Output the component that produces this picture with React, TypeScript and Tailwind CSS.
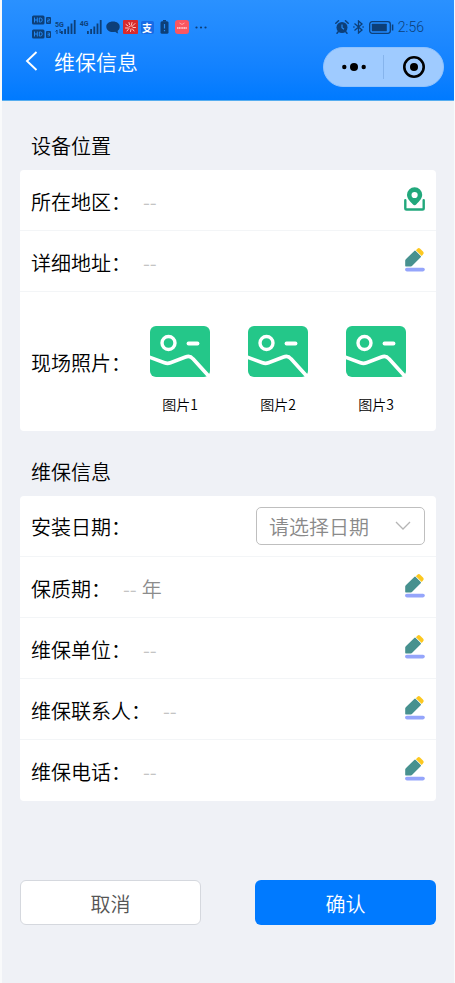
import type { ReactNode } from "react";

function PencilIcon() {
  return (
    <svg width="20" height="24" viewBox="0 0 20 24" aria-hidden="true">
      <path d="M.2 12.600a2 2 0 0 1 .6-1.400L9.300 2.900a1 1 0 0 1 1.400 0l5 5a1 1 0 0 1 0 1.400L7.200 17.800a2 2 0 0 1-1.400.6H.8a.6.6 0 0 1-.6-.6z" fill="#47918f" />
      <path d="M10.900 2.300 12.400.8a2 2 0 0 1 2.800 0l2.800 2.800a2 2 0 0 1 0 2.800l-1.300 1.500z" fill="#fcc820" />
      <rect x="0" y="19.700" width="19.800" height="3.700" rx="1.800" fill="#95a5fb" />
    </svg>
  );
}

function LocationIcon() {
  return (
    <svg width="21" height="24" viewBox="0 0 21 24" aria-hidden="true">
      <path
        d="M10.600.2A7.600 7.600 0 0 0 3 7.800c0 3.600 2.700 6.300 5.800 9.400a2.500 2.500 0 0 0 3.600 0c3.100-3.100 5.800-5.800 5.800-9.400A7.600 7.600 0 0 0 10.600.2zm0 4.700a3.100 3.100 0 1 1 0 6.200 3.100 3.100 0 0 1 0-6.200z"
        fill="#22a87c"
        fillRule="evenodd"
      />
      <path d="M1.300 13.300v7.900a1.300 1.300 0 0 0 1.300 1.300h15.800a1.300 1.300 0 0 0 1.300-1.300v-7.900" fill="none" stroke="#22a87c" strokeWidth="2.400" strokeLinecap="round" />
    </svg>
  );
}

function PictureIcon() {
  return (
    <svg width="60" height="51" viewBox="0 0 60 51" aria-hidden="true">
      <rect width="60" height="51" rx="6" fill="#24c789" />
      <circle cx="18.500" cy="17" r="6.500" fill="none" stroke="#fff" strokeWidth="3.400" />
      <path d="M38.500 17.500h9" stroke="#fff" strokeWidth="3.800" strokeLinecap="round" />
      <path d="M-1 31 14.500 36.800q3 1.100 6 0L35.500 31q4.500-1.800 7.500 1.800L59.500 51" fill="none" stroke="#fff" strokeWidth="3.600" />
    </svg>
  );
}

function HdIcon({ sim }: { sim: string }) {
  return (
    <svg width="20" height="10" viewBox="0 0 20 10" aria-hidden="true">
      <rect width="12.500" height="9" y=".5" rx="1.500" fill="#0d3f78" />
      <path d="M2.500 2.500v5M5.300 2.500v5M2.500 5h2.800M7.300 3v4h1.200q1.700 0 1.700-2T8.500 3z" stroke="#2289f5" strokeWidth="1" fill="none" />
      <rect x="14" y="2" width="5" height="7" rx="1" fill="#0d3f78" />
      <path d={sim} stroke="#2289f5" strokeWidth=".8" fill="none" />
    </svg>
  );
}

function SignalBars() {
  return (
    <svg width="15" height="14" viewBox="0 0 15 14" fill="#0d3f78" aria-hidden="true">
      <rect x="0" y="11" width="1.800" height="3" />
      <rect x="3.200" y="9" width="1.800" height="5" />
      <rect x="6.400" y="6.500" width="1.800" height="7.500" />
      <rect x="9.600" y="3.500" width="1.800" height="10.500" />
      <rect x="12.800" y="0" width="1.800" height="14" />
    </svg>
  );
}

function StatusBar() {
  return (
    <div className="flex h-[30px] items-center justify-between pl-[30px] pr-[30px] text-[#0d3f78]">
      <div className="flex items-center">
        <div className="flex flex-col gap-1">
          <HdIcon sim="M15.500 4h2v1.500h-2V7h2" />
          <HdIcon sim="M15.500 4h2v3h-2M15.500 5.500h2" />
        </div>
        <div className="ml-[3px] flex flex-col items-start">
          <span className="font-['Roboto',sans-serif] text-[7px] font-bold leading-[8px]">5G</span>
          <svg width="7" height="5" viewBox="0 0 7 5" fill="none" stroke="#0d3f78" aria-hidden="true">
            <path d="M2 5V1M.5 2.500 2 1M5 0v4M6.500 2.500 5 4" />
          </svg>
        </div>
        <div className="-ml-[3px]"><SignalBars /></div>
        <span className="ml-1 h-[14px] font-['Roboto',sans-serif] text-[7px] font-bold leading-[8px]">4G</span>
        <div className="-ml-[2px]"><SignalBars /></div>
        <svg className="ml-1" width="14" height="13" viewBox="0 0 14 13" aria-hidden="true">
          <path d="M7 .5C3 .5.300 2.700.300 5.700S3 11 7 11c.8 0 1.500 0 2.200-.3.700.8 1.800 1.500 3 1.600-.5-.8-.7-1.700-.5-2.600 1.300-1 2-2.400 2-4C13.700 2.700 11 .5 7 .5z" fill="#0d3f78" />
        </svg>
        <svg className="ml-[3px]" width="15" height="14" viewBox="0 0 15 14" aria-hidden="true">
          <rect width="15" height="14" rx="1" fill="#d92a2c" />
          <path d="M3 4.500 5 6M6 2.500l.5 2M9 2.500l-.5 2.200M12 3.500 10 5.500M12.500 7.500H10M2.500 8H5M4 11l2-2.500M7.500 11.500l.5-2.500M11 11 9.500 9M6 7q1.500-2 3.500-1" stroke="#ffc9be" strokeWidth="1" fill="none" strokeLinecap="round" />
        </svg>
        <span className="ml-[3px] flex h-[13px] w-[13px] items-center justify-center rounded-[2px] bg-[#176be6] text-[10px] font-bold leading-[13px] text-white">支</span>
        <svg className="ml-[6px]" width="9" height="14" viewBox="0 0 9 14" aria-hidden="true">
          <path d="M3 0h3v1.500H3z" fill="#0d3f78" />
          <rect x=".5" y="1.200" width="8" height="12.500" rx="1.500" fill="#0d3f78" />
          <path d="M4.500 4v4.500M4.500 10v1.200" stroke="#2289f5" strokeWidth="1.200" />
        </svg>
        <svg className="ml-[6px]" width="14" height="14" viewBox="0 0 14 14" aria-hidden="true">
          <rect width="14" height="14" rx="3" fill="#fa5660" />
          <path d="M4.500 3q2.500 3 5 0" stroke="#ffb9bd" strokeWidth=".8" fill="none" />
          <path d="M2 8h10" stroke="#ffd9db" strokeWidth="1.600" strokeDasharray="1.300 .4" />
        </svg>
        <svg className="ml-[6px]" width="12" height="3" viewBox="0 0 12 3" fill="#0d3f78" aria-hidden="true">
          <circle cx="1.500" cy="1.500" r="1.100" />
          <circle cx="6" cy="1.500" r="1.100" />
          <circle cx="10.500" cy="1.500" r="1.100" />
        </svg>
      </div>
      <div className="flex items-center">
        <svg width="14" height="14" viewBox="0 0 14 14" aria-hidden="true">
          <circle cx="7" cy="7.500" r="5.500" fill="#0d3f78" />
          <path d="M.8 3.200 3.500.8M13.200 3.200 10.500.8M3.200 11.800 2 13.200M10.800 11.800 12 13.200" stroke="#0d3f78" strokeWidth="1.500" strokeLinecap="round" />
          <path d="M7 4.500v3.200l2 1.600" stroke="#2289f5" strokeWidth="1.200" fill="none" />
        </svg>
        <svg className="ml-1" width="11" height="14" viewBox="0 0 11 14" aria-hidden="true">
          <path d="M1.500 3.500 9 10 5.500 13V1L9 4 1.500 10.500" stroke="#0d3f78" strokeWidth="1.300" fill="none" />
          <path d="M.3 7h1.200M9.500 7h1.200" stroke="#0d3f78" strokeWidth="1.300" />
        </svg>
        <svg className="ml-[5px]" width="25" height="13" viewBox="0 0 25 13" aria-hidden="true">
          <rect x=".7" y=".7" width="20.600" height="11.600" rx="2.500" fill="none" stroke="#0d3f78" strokeWidth="1.300" />
          <rect x="2.800" y="2.700" width="15" height="7.600" rx=".5" fill="#0d3f78" />
          <path d="M23.600 3.500v6" stroke="#0d3f78" strokeWidth="1.500" />
        </svg>
        <span className="ml-1 font-['Roboto',sans-serif] text-[14px] leading-5">2:56</span>
      </div>
    </div>
  );
}

function NavBar() {
  return (
    <div className="mt-[5px] flex h-10 items-center pl-[22px] pr-[10px]">
      <button type="button" aria-label="返回" className="pb-3">
        <svg width="14" height="20" viewBox="0 0 14 20" aria-hidden="true">
          <path d="M12.500 1 3 10l9.500 9" fill="none" stroke="#fff" strokeWidth="1.900" />
        </svg>
      </button>
      <h1 className="ml-4 pb-3 text-[21px] leading-[30px] text-white">维保信息</h1>
      <div className="ml-auto flex h-10 w-[121px] items-center rounded-full border border-[#8fc2fd] bg-[#9fcbff]">
        <button type="button" aria-label="更多" className="flex flex-1 justify-center">
          <svg width="26" height="10" viewBox="0 0 26 10" aria-hidden="true">
            <circle cx="3.300" cy="5" r="2.200" />
            <circle cx="13" cy="5" r="4" />
            <circle cx="22.700" cy="5" r="2.200" />
          </svg>
        </button>
        <span className="h-6 w-px bg-[#86b4ec]" />
        <button type="button" aria-label="关闭" className="flex flex-1 justify-center">
          <svg width="24" height="24" viewBox="0 0 24 24" aria-hidden="true">
            <circle cx="12" cy="12" r="9.700" fill="none" stroke="#000" strokeWidth="2.600" />
            <circle cx="12" cy="12" r="4" />
          </svg>
        </button>
      </div>
    </div>
  );
}

function Section({ title, children }: { title: string; children: ReactNode }) {
  return (
    <section>
      <h2 className="px-[11px] pb-[9px] pt-[26px] text-[20px] leading-[30px]">{title}</h2>
      <div className="divide-y divide-[#f3f5f7] rounded-[4px] bg-white">{children}</div>
    </section>
  );
}

function Row({ label, value, unit, action, icon }: { label: string; value: string; unit?: string; action: string; icon: ReactNode }) {
  return (
    <div className="flex h-[61px] items-center px-[11px] pt-[3px] text-[20px] leading-[30px]">
      <span>{label}：</span>
      <span className="ml-3 text-[#c4c4c4]">{value}</span>
      {unit && <span className="ml-[5px] text-[#8c8c8c]">{unit}</span>}
      <button type="button" aria-label={action} className="ml-auto pb-[6px]">
        {icon}
      </button>
    </div>
  );
}

const photos = ["图片1", "图片2", "图片3"];

export default function App() {
  return (
    <div lang="zh-CN" className="min-h-screen bg-[#f9fafb] pl-[2px] pr-px font-['Noto_Sans_CJK_SC',sans-serif] font-[350] text-black">
      <div className="min-h-screen bg-[#eff1f6]">
        <header className="border-b border-[#55adf0] bg-gradient-to-b from-[#2a91ff] to-[#007aff] pb-[13px] pt-3">
          <StatusBar />
          <NavBar />
        </header>

        <main className="px-[18px] pb-10 pt-1">
          <Section title="设备位置">
            <Row label="所在地区" value="--" action="选择所在地区" icon={<LocationIcon />} />
            <Row label="详细地址" value="--" action="编辑详细地址" icon={<PencilIcon />} />
            <div className="flex items-center px-[11px] text-[20px] leading-[30px]">
              <span className="pt-[2px]">现场照片：</span>
              <div className="ml-[19px] flex flex-1 justify-between pb-[17px] pr-[19px] pt-[34px]">
                {photos.map((name) => (
                  <button key={name} type="button" className="flex flex-col items-center">
                    <PictureIcon />
                    <span className="mt-[17px] text-[14px] leading-[20px]">{name}</span>
                  </button>
                ))}
              </div>
            </div>
          </Section>

          <Section title="维保信息">
            <div className="flex h-[61px] items-center justify-between px-[11px] text-[20px] leading-[30px]">
              <label htmlFor="install-date" className="pt-[2px]">安装日期：</label>
              <div className="relative">
                <select
                  id="install-date"
                  defaultValue=""
                  className="block h-[38px] w-[169px] appearance-none rounded-[5px] border border-[#bfbfbf] bg-white pl-3 pt-[2px] text-[20px] leading-[30px] text-[#8a8a8a]"
                >
                  <option value="">请选择日期</option>
                </select>
                <svg className="pointer-events-none absolute right-[14px] top-[14px]" width="16" height="9" viewBox="0 0 16 9" aria-hidden="true">
                  <path d="M1 1l7 7 7-7" fill="none" stroke="#b5b5b5" strokeWidth="1.300" />
                </svg>
              </div>
            </div>
            <Row label="保质期" value="--" unit="年" action="编辑保质期" icon={<PencilIcon />} />
            <Row label="维保单位" value="--" action="编辑维保单位" icon={<PencilIcon />} />
            <Row label="维保联系人" value="--" action="编辑维保联系人" icon={<PencilIcon />} />
            <Row label="维保电话" value="--" action="编辑维保电话" icon={<PencilIcon />} />
          </Section>

          <div className="mt-[79px] grid grid-cols-2 gap-[54px] text-[20px] leading-[30px]">
            <button type="button" className="h-[45px] rounded-[6px] border border-[#d5d8de] bg-white pt-[2px] text-[#555]">
              取消
            </button>
            <button type="button" className="h-[45px] rounded-[6px] bg-[#007aff] pt-[2px] text-white">
              确认
            </button>
          </div>
        </main>
      </div>
    </div>
  );
}
